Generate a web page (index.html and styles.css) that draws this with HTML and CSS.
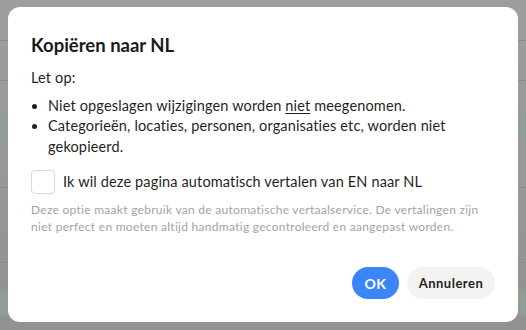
FILE: index.html
```html
<!DOCTYPE html>
<html lang="nl">
<head>
<meta charset="utf-8">
<link rel="stylesheet" href="styles.css">
</head>
<body>
<div class="page">
  <div class="row r1"></div>
  <div class="row r2"></div>
  <div class="band"></div>
  <div class="gap"></div>
  <div class="row r3"></div>
  <div class="row r4"></div>
  <div class="band"></div>
</div>
<div class="dialog">
  <h1 class="title">Kopiëren naar NL</h1>
  <p class="intro">Let op:</p>
  <ul class="list">
    <li>Niet opgeslagen wijzigingen worden <u>niet</u> meegenomen.</li>
    <li>Categorieën, locaties, personen, organisaties etc, worden niet gekopieerd.</li>
  </ul>
  <label class="check">
    <span class="box"></span>
    <span class="check-label">Ik wil deze pagina automatisch vertalen van EN naar NL</span>
  </label>
  <p class="help">Deze optie maakt gebruik van de automatische vertaalservice. De vertalingen zijn niet perfect en moeten altijd handmatig gecontroleerd en aangepast worden.</p>
  <div class="actions">
    <button class="btn btn-ok">OK</button>
    <button class="btn btn-cancel">Annuleren</button>
  </div>
</div>
</body>
</html>
```
FILE: styles.css
```css
html, body {
  margin: 0;
  padding: 0;
  width: 526px;
  height: 330px;
  overflow: hidden;
}
body {
  background: linear-gradient(#9e9e9e, #929292);
  font-family: "Lato", "Liberation Sans", sans-serif;
  color: #1f1f1f;
}
.page {
  display: flex;
  flex-direction: column;
  padding-top: 40px;
}
.row {
  border-top: 1px solid #8b8b8b;
  box-sizing: border-box;
}
.r1 { height: 40px; }
.r2 { height: 33px; }
.r3 { height: 75px; }
.r4 { height: 28px; }
.band {
  height: 25px;
  background: #8f9d94;
}
.gap { height: 49px; }
.dialog {
  position: absolute;
  left: 8px;
  top: 7px;
  width: 510px;
  height: 315px;
  box-sizing: border-box;
  padding: 26px 23px 23px;
  background: #fff;
  border-radius: 12px;
  display: flex;
  flex-direction: column;
}
.title {
  margin: 0;
  font-size: 18.5px;
  line-height: 24px;
  font-weight: 700;
  color: #1a1a1a;
}
.intro {
  margin: 11px 0 0;
  font-size: 14.5px;
  letter-spacing: 0.15px;
  line-height: 20px;
}
.list {
  margin: 8px 0 0;
  padding-left: 17px;
  font-size: 14.5px;
  letter-spacing: 0.15px;
  line-height: 20.3px;
}
.list u {
  text-underline-offset: 2px;
}
.check {
  display: flex;
  align-items: center;
  gap: 8px;
  margin-top: 13px;
}
.box {
  width: 24px;
  height: 24px;
  box-sizing: border-box;
  border: 1px solid #d9d9d9;
  border-radius: 4px;
  flex: none;
}
.check-label {
  font-size: 14.5px;
  letter-spacing: 0.15px;
  line-height: 20px;
}
.help {
  margin: 7px 0 0;
  font-size: 12px;
  letter-spacing: 0.28px;
  line-height: 17px;
  color: #a3a3a3;
}
.actions {
  margin-top: auto;
  display: flex;
  justify-content: flex-end;
  gap: 8px;
}
.btn {
  height: 32px;
  border: none;
  border-radius: 16px;
  font-family: inherit;
  font-weight: 700;
  font-size: 13px;
  letter-spacing: 0.5px;
  padding: 0;
  cursor: pointer;
}
.btn-ok {
  width: 47px;
  background: #3a86f8;
  color: #fff;
  font-size: 14px;
}
.btn-cancel {
  width: 88px;
  background: #f5f3f1;
  color: #1f1f1f;
}
```
